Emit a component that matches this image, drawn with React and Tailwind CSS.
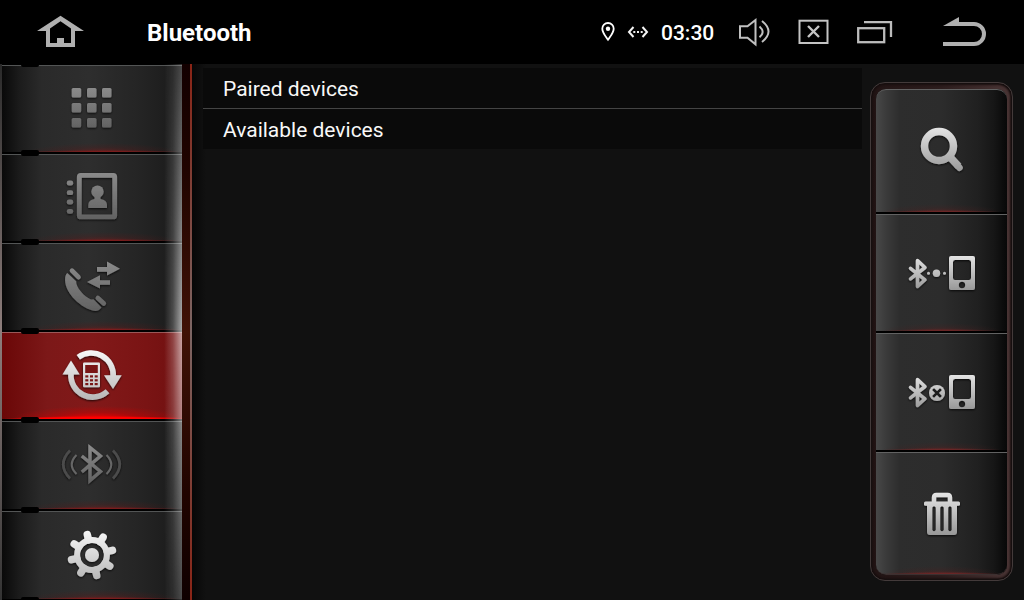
import React from "react";

const TONES = {
  dim: ["#8a8a8a", "#626262"],
  bright: ["#f8f8f8", "#b8b8b8"],
  silver: ["#e4e4e4", "#989898"],
};

/* Icon drawn on a shared canvas; box picks the part of it that is shown. */
function Icon({ id, box, from, to, tone, className, children }) {
  const [a, b] = TONES[tone];
  return (
    <svg viewBox={box} className={className} aria-hidden="true">
      <defs>
        <linearGradient id={id} gradientUnits="userSpaceOnUse" x1="0" x2="0" y1={from} y2={to}>
          <stop offset="0" stopColor={a} />
          <stop offset="1" stopColor={b} />
        </linearGradient>
        <filter id={id + "-s"} x="-20%" y="-20%" width="140%" height="140%">
          <feDropShadow dx="0" dy="1" stdDeviation="0.9" floodColor="#000" floodOpacity="0.8" />
        </filter>
      </defs>
      <g filter={`url(#${id}-s)`}>{children(`url(#${id})`)}</g>
    </svg>
  );
}

const GEAR = [0, 45, 90, 135, 180, 225, 270, 315];

const navItems = [
  {
    id: "keypad", label: "Keypad", size: "h-[89px] shrink-0 border-b-2", box: "60 66 64 86", from: 88, to: 128, tone: "dim",
    draw: (p) => [88, 103, 118].flatMap((y) =>
      [71.7, 87, 102].map((x) => (
        <rect key={x + "-" + y} x={x} y={y} width="9.500" height="9.500" rx="1.500" fill={p} />
      ))),
  },
  {
    id: "contacts", label: "Contacts", size: "h-[89px] shrink-0 border-b-2", box: "60 155 64 86", from: 173, to: 219, tone: "dim",
    draw: (p) => (
      <>
        <rect x="79.300" y="175.300" width="35.400" height="41.600" rx="1.500" fill="none" stroke={p} strokeWidth="4.800" />
        <circle cx="97.500" cy="191.700" r="6.200" fill={p} />
        <path d="M94.500 195H100.500V199Q107 200 107 205V208H88.300V205Q88.300 200 94.500 199Z" fill={p} />
        {[183, 192.7, 202, 211.3].map((y) => (
          <rect key={y} x="66.800" y={y - 2.4} width="6.400" height="4.800" rx="2.200" fill={p} />
        ))}
      </>
    ),
  },
  {
    id: "calls", label: "Call history", size: "h-[89px] shrink-0 border-b-2", box: "60 244 64 86", from: 262, to: 311, tone: "dim",
    draw: (p) => (
      <>
        <path d="M67.300 273L76.200 281.300C75.500 287 84 296.500 91 299.500L93.500 299.300L101.500 307.500C99 311 96 311.600 92.500 310.600C78 306 63.500 291 65.200 277.500C65.500 275.300 66.200 274 67.300 273Z" fill={p} />
        <path d="M72 270.700L78.500 277.200M97.800 298L103.800 303.500" stroke={p} strokeWidth="4.600" strokeLinecap="round" />
        <path d="M97 267H107V261.500L120 268.700L107 275.500V271.700H97Z" fill={p} />
        <path d="M110 280.200H100V275.300L87 282L100 288.500V284.700H110Z" fill={p} />
      </>
    ),
  },
  {
    id: "sync", label: "Device connection", active: true, size: "h-[89px] shrink-0 border-b-2", box: "60 333 64 86", from: 350, to: 399, tone: "bright",
    draw: (p) => (
      <>
        <path d="M78.300 357.200A22 22 0 0 1 113.200 376.500" fill="none" stroke={p} strokeWidth="5.600" />
        <path d="M104 375.300H121.700L113 389Z" fill={p} />
        <path d="M71 373.500A21.800 21.800 0 0 0 107.500 391.300" fill="none" stroke={p} strokeWidth="5.600" />
        <path d="M62.500 374.500H79.700L71 360.500Z" fill={p} />
        <rect x="83" y="362.500" width="17" height="24.700" rx="1.200" fill={p} />
        <rect x="85.200" y="365" width="12.600" height="8" fill="#791818" />
        {[375.3, 379.2, 383].map((y) =>
          [85.3, 90, 94.7].map((x) => (
            <rect key={x + "-" + y} x={x} y={y} width="3" height="2.200" fill="#791818" />
          )))}
      </>
    ),
  },
  {
    id: "bluetooth", label: "Bluetooth status", size: "h-[90px] shrink-0 border-b-2", box: "60 422 64 87", from: 446, to: 482, tone: "dim",
    draw: (p) => (
      <>
        <path d="M81.800 456L100.500 471.500L90 480.500V447.500L100.500 456L81.800 472" fill="none" stroke={p} strokeWidth="3.400" />
        <path d="M76.500 455Q67 464.500 76.500 474M106.500 455Q116 464.500 106.500 474" fill="none" stroke="#666" strokeWidth="2" />
        <path d="M70 450.500Q56.500 464.500 70 478.500M113 450.500Q126.500 464.500 113 478.500" fill="none" stroke="#4c4c4c" strokeWidth="2.600" />
      </>
    ),
  },
  {
    id: "settings", label: "Settings", size: "flex-1 border-b", box: "60 512 64 86", from: 530, to: 579, tone: "bright",
    draw: (p) => (
      <>
        <circle cx="92" cy="555" r="14.900" fill="none" stroke={p} strokeWidth="6" />
        <circle cx="92" cy="555" r="7" fill={p} />
        {GEAR.map((a) => {
          const r = ((a - 103) * Math.PI) / 180;
          const c = Math.cos(r);
          const s = Math.sin(r);
          return (
            <path key={a} d={`M${92 + 15.5 * c} ${555 + 15.5 * s}L${92 + 21 * c} ${555 + 21 * s}`}
              stroke={p} strokeWidth="7.400" strokeLinecap="round" />
          );
        })}
      </>
    ),
  },
];

function Phone({ p }) {
  return (
    <g>
      <path d="M910.500 268.300L925 279.800L917.500 286.500V260.500L925 267.500L910.500 278.800" fill="none" stroke={p} strokeWidth="3.500" strokeLinejoin="round" strokeLinecap="round" />
      <path fillRule="evenodd" fill={p} d="M951 256H973Q975 256 975 258V288Q975 290 973 290H951Q949 290 949 288V258Q949 256 951 256ZM955 260Q953 260 953 262V278Q953 280 955 280H969Q971 280 971 278V262Q971 260 969 260ZM962 281.800A3.200 3.200 0 1 0 962 288.200A3.200 3.200 0 1 0 962 281.800Z" />
    </g>
  );
}

const actions = [
  {
    id: "search", label: "Search", size: "h-[125px] rounded-t-[10px] border-b-2 border-b-black", svg: "h-[122px]", box: "904 90 76 122", from: 128, to: 172, tone: "silver",
    draw: (p) => (
      <>
        <path d="M950 157L958.500 166.300" stroke={p} strokeWidth="7.600" strokeLinejoin="round" />
        <path d="M957 165L959.500 167.700" stroke={p} strokeWidth="6.500" strokeLinecap="round" />
        <circle cx="939" cy="146" r="14.500" fill="none" stroke={p} strokeWidth="7.400" />
      </>
    ),
  },
  {
    id: "connect", label: "Connect", size: "h-[119px] border-b-2 border-b-black", svg: "h-[116px]", box: "904 215 76 116", from: 256, to: 290, tone: "silver",
    draw: (p) => (
      <>
        <Phone p={p} />
        <circle cx="928.500" cy="273.300" r="1.500" fill={p} />
        <circle cx="936.500" cy="273.300" r="3.700" fill={p} />
        <circle cx="944.500" cy="273.300" r="1.500" fill={p} />
      </>
    ),
  },
  {
    id: "disconnect", label: "Disconnect", size: "h-[119px] border-b-2 border-b-black", svg: "h-[116px]", box: "904 215 76 116", from: 256, to: 290, tone: "silver",
    draw: (p) => (
      <>
        <Phone p={p} />
        <circle cx="937" cy="274" r="8" fill={p} />
        <path d="M934 271L940 277M940 271L934 277" stroke="#1c1c1c" strokeWidth="2.600" strokeLinecap="square" />
      </>
    ),
  },
  {
    id: "delete", label: "Delete", size: "h-[123px] rounded-b-[10px] border-b border-b-[#3c3030]", svg: "h-[121px]", box: "904 453 76 121", from: 493, to: 535, tone: "silver",
    draw: (p) => (
      <>
        <path d="M934 502.500V497.500Q934 495 936.500 495H947.500Q950 495 950 497.500V502.500" fill="none" stroke={p} strokeWidth="4.400" />
        <rect x="924" y="501.500" width="36" height="4.300" rx="1.500" fill={p} />
        <path fillRule="evenodd" fill={p} d="M927 504H957V532Q957 535 954 535H930Q927 535 927 532ZM932.300 507.500V530Q934 532.500 935.800 530V507.500Q934 505 932.300 507.500ZM940.200 507.500V530Q942 532.500 943.800 530V507.500Q942 505 940.200 507.500ZM948.200 507.500V530Q950 532.500 951.700 530V507.500Q950 505 948.200 507.500Z" />
      </>
    ),
  },
];

function Header() {
  return (
    <header className="flex h-16 shrink-0 items-center bg-black px-9 text-white">
      <button type="button" aria-label="Home">
        <svg viewBox="36 0 49 64" className="h-16 w-[49px]" aria-hidden="true">
          <path fill="#b0b0b0" fillRule="evenodd" d="M37 31L60.500 15.700L84 31H75V47H46V31ZM50 28.500V43H57V38H64V43H71V28.500L60.500 21.300Z" />
        </svg>
      </button>
      <h1 className="ml-[62px] pt-px text-2xl font-bold">Bluetooth</h1>
      <div className="ml-auto flex items-center">
        <svg viewBox="600 0 16 64" className="h-16 w-4" aria-hidden="true">
          <path d="M608 39.800C605 35.500 602.300 32.500 602.300 28.700A5.700 5.700 0 0 1 613.700 28.700C613.700 32.500 611 35.500 608 39.800Z" fill="none" stroke="#fff" strokeWidth="1.800" />
          <circle cx="608" cy="28.800" r="2.200" fill="#fff" />
        </svg>
        <svg viewBox="627 0 22 64" className="ml-[11px] h-16 w-[22px]" aria-hidden="true">
          <path d="M633.500 27L629 32L633.500 37M642.500 27L647 32L642.500 37" fill="none" stroke="#f4f4f4" strokeWidth="2" />
          <path d="M633.300 32h2m1.700 0h2m1.700 0h2" stroke="#eee" strokeWidth="1.800" />
        </svg>
        <time className="ml-3 w-[54px] pt-[3px] text-[21px] font-medium">03:30</time>
        <button type="button" aria-label="Volume" className="ml-[23px]">
          <svg viewBox="738 0 33 64" className="h-16 w-[33px]" aria-hidden="true">
            <g fill="none" stroke="#c0c0c0" strokeWidth="2">
              <path d="M740 26.300H747.500L755.500 20V44.300L747.500 37.700H740Z" />
              <path d="M759.500 26.500Q765.800 32 759.500 37.300" />
              <path d="M762 21Q775 31.500 762 42" />
            </g>
          </svg>
        </button>
        <button type="button" aria-label="Close application" className="ml-[27px]">
          <svg viewBox="798 0 31 64" className="h-16 w-[31px]" aria-hidden="true">
            <g fill="none" stroke="#c4c4c4" strokeWidth="2">
              <rect x="799.500" y="20.700" width="28" height="22.300" />
              <path d="M808 26L819 37M819 26L808 37" strokeWidth="2.400" />
            </g>
          </svg>
        </button>
        <button type="button" aria-label="Recent applications" className="ml-[27px]">
          <svg viewBox="856 0 37 64" className="h-16 w-[37px]" aria-hidden="true">
            <g fill="none" stroke="#bcbcbc" strokeWidth="2.300">
              <rect x="858.200" y="28.200" width="26" height="14" />
              <path d="M864 22.200H891V37" />
            </g>
          </svg>
        </button>
        <button type="button" aria-label="Back" className="ml-[49px]">
          <svg viewBox="942 0 46 64" className="h-16 w-[46px]" aria-hidden="true">
            <path d="M958 24H974A10 10 0 0 1 974 44H943" fill="none" stroke="#b0b0b0" strokeWidth="4" />
            <path d="M943 26L959 17V26Z" fill="#b0b0b0" />
          </svg>
        </button>
      </div>
    </header>
  );
}

function NavButton({ item, last }) {
  return (
    <button
      type="button"
      aria-label={item.label}
      aria-current={item.active ? "page" : undefined}
      className={
        "relative flex w-full items-start justify-center border-t border-b-black " +
        item.size +
        (item.active
          ? " border-t-[#9a5858] bg-[radial-gradient(ellipse_95px_3px_at_53%_100%,#ff0000_60%,transparent_100%),radial-gradient(ellipse_85px_13px_at_53%_100%,#f00000_5%,#d0000077_50%,transparent_100%),linear-gradient(90deg,#6a0707_0%,#7c1818_25%,#821919_50%,#7a1414_80%,#701010_100%)]"
          : " border-t-[#535555] bg-[radial-gradient(ellipse_80px_2px_at_56%_100%,#7a1c1c_30%,transparent_100%),radial-gradient(ellipse_75px_9px_at_56%_100%,#6e1c1c99_5%,#5a181844_50%,transparent_100%),linear-gradient(90deg,#090909_0%,#1c1c1c_10%,#2a2a2a_22%,#2e2e2e_48%,#252525_75%,#1a1a1a_100%)]")
      }
    >
      <span className="absolute left-[19px] -top-[5px] z-10 h-[6px] w-[18px] rounded-[2px] bg-black" />
      {last && <span className="absolute left-[19px] -bottom-[4px] z-10 h-[6px] w-[18px] rounded-[2px] bg-black" />}
      <Icon {...item} className={item.id === "bluetooth" ? "h-[87px] w-16" : "h-[86px] w-16"}>{item.draw}</Icon>
    </button>
  );
}

export default function App() {
  return (
    <div className="flex min-h-screen flex-col bg-[#111111] font-[Roboto,sans-serif]">
      <Header />
      <div className="flex flex-1">
        <div className="flex w-48 shrink-0">
          <div className="w-[2px] bg-[linear-gradient(#2a2a2a,#8e7e7c_50%,#333333)]" />
          <nav aria-label="Bluetooth sections" className="relative flex flex-1 flex-col overflow-hidden bg-black pt-px">
            {navItems.map((item, i) => (
              <NavButton key={item.id} item={item} last={i === navItems.length - 1} />
            ))}
            <span className="pointer-events-none absolute inset-y-0 right-0 w-[18px] bg-[linear-gradient(90deg,transparent,#ffffff38_50%,#ffffffa0)] [mask-image:linear-gradient(#0005,#000_50%,#0005)]" />
          </nav>
          <div className="w-2 bg-[linear-gradient(#120000,#200400_20%,#401206_50%,#200400_80%,#0e0000)]" />
          <div className="w-[2px] bg-[linear-gradient(#8a2416,#80392f_18%,#7c6664_50%,#80392f_82%,#8a2416)]" />
        </div>
        <main className="flex flex-1 bg-[linear-gradient(90deg,#070707,#111111_14px)] px-[11px]">
          <ul className="flex-1 pt-1 text-[21px] leading-[38px] text-[#f8f8f8]">
            <li className="border-b border-[#444444] bg-[#0a0a0a] pl-5 pt-0.5">Paired devices</li>
            <li className="bg-[#0a0a0a] pl-5 pt-0.5">Available devices</li>
          </ul>
          <div className="ml-2 mt-[18px] h-fit w-[143px] rounded-[15px] border border-[#433a3a] bg-[linear-gradient(90deg,#211414,#2c1d1d_50%,#4a3535)] p-[5px] pt-[6px] shadow-[inset_0_0_0_1px_#160f0f,inset_0_0_2px_2px_#1a0f0f]">
            <div role="toolbar" aria-label="Device actions" className="flex flex-col rounded-[10px] bg-black">
              {actions.map((a) => (
                <button
                  key={a.id}
                  type="button"
                  aria-label={a.label}
                  className={
                    "flex items-start justify-center border-t border-t-[#626262] bg-[radial-gradient(ellipse_60px_2px_at_50%_100%,#6a2626_30%,transparent_100%),radial-gradient(ellipse_60px_8px_at_50%_100%,#5a222299_5%,#4a202044_50%,transparent_100%),linear-gradient(90deg,#484848_0%,#3a3a3a_8%,#2d2d2d_18%,#2c2c2c_50%,#202020_78%,#161616_90%,#080808_100%)] " +
                    a.size
                  }
                >
                  <Icon {...a} className={"w-[76px] " + a.svg}>{a.draw}</Icon>
                </button>
              ))}
            </div>
          </div>
        </main>
      </div>
    </div>
  );
}
